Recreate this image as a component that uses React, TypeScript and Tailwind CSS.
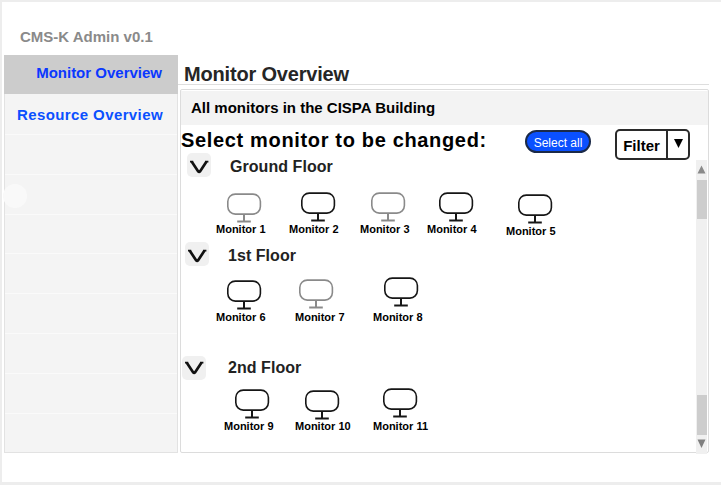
type MonitorInfo = {
  name: string;
  cell: string;
  icon: string;
  label: string;
  dim?: boolean;
};

type FloorInfo = {
  title: string;
  section: string;
  header: string;
  chevron: string;
  heading: string;
  row: string;
  monitors: MonitorInfo[];
};

const floors: FloorInfo[] = [
  {
    title: 'Ground Floor',
    section: 'h-[89px]',
    header: 'pl-[6px]',
    chevron: 'mt-0',
    heading: 'ml-[19px] mt-[4px] tracking-[0.05px]',
    row: 'pl-[35px] pt-[15px]',
    monitors: [
      { name: 'Monitor 1', cell: 'w-[73px]', icon: 'ml-[11px] mt-[1px]', label: 'mt-0', dim: true },
      { name: 'Monitor 2', cell: 'w-[71px]', icon: 'ml-[12px]', label: 'mt-[1px]' },
      { name: 'Monitor 3', cell: 'w-[67px]', icon: 'ml-[11px]', label: 'mt-[1px]', dim: true },
      { name: 'Monitor 4', cell: 'w-[79px]', icon: 'ml-[12px]', label: 'mt-[1px]' },
      { name: 'Monitor 5', cell: 'w-[60px]', icon: 'ml-[12px] mt-[2px]', label: 'mt-[1px]' },
    ],
  },
  {
    title: '1st Floor',
    section: 'h-[114px]',
    header: 'pl-[4px]',
    chevron: 'mt-[-1px]',
    heading: 'ml-[19px] mt-[4px] tracking-[0.05px]',
    row: 'pl-[35px] pt-[11px]',
    monitors: [
      { name: 'Monitor 6', cell: 'w-[79px]', icon: 'ml-[11px] mt-[3px]', label: 'mt-[1px]' },
      { name: 'Monitor 7', cell: 'w-[78px]', icon: 'ml-[4px] mt-[2px]', label: 'mt-[2px]', dim: true },
      { name: 'Monitor 8', cell: 'w-[60px]', icon: 'ml-[10.5px]', label: 'mt-[4px]' },
    ],
  },
  {
    title: '2nd Floor',
    section: 'h-[96px]',
    header: 'pl-px',
    chevron: '-mt-[5px] -ml-px',
    heading: 'ml-[22px] mt-[2px] tracking-[0.05px]',
    row: 'pl-[43px] pt-[8px]',
    monitors: [
      { name: 'Monitor 9', cell: 'w-[71px]', icon: 'ml-[11px] mt-[1px]', label: 'mt-px' },
      { name: 'Monitor 10', cell: 'w-[78px]', icon: 'ml-[10px] mt-[2px]', label: 'mt-0' },
      { name: 'Monitor 11', cell: 'w-[60px]', icon: 'ml-[10px]', label: 'mt-[2px]' },
    ],
  },
];

function MonitorIcon({ dim }: { dim?: boolean }) {
  return (
    <svg
      width="35"
      height="30"
      viewBox="0 0 35 30"
      fill="none"
      className={dim ? 'block text-[#8a8a8a]' : 'block text-[#161616]'}
      stroke="currentColor"
    >
      <rect x="0.8" y="1.1" width="32.6" height="20" rx="7.5" strokeWidth="1.6" />
      <path d="M17 21v7" strokeWidth="2" />
      <path d="M10.2 28.5h13.6" strokeWidth="2" />
    </svg>
  );
}

function Monitor({ info }: { info: MonitorInfo }) {
  return (
    <div className={`shrink-0 ${info.cell}`}>
      <div className={info.icon}>
        <MonitorIcon dim={info.dim} />
      </div>
      <div className={`whitespace-nowrap text-[11px] leading-[12px] font-bold text-black ${info.label}`}>
        {info.name}
      </div>
    </div>
  );
}

function Floor({ floor }: { floor: FloorInfo }) {
  return (
    <section className={floor.section}>
      <div className={`flex h-6 ${floor.header}`}>
        <button className="flex size-6 shrink-0 items-center justify-center rounded-[5px] bg-[#f0f0f0]">
          <svg
            width="24"
            height="24"
            viewBox="0 0 24 24"
            fill="none"
            stroke="#111"
            className={`block shrink-0 ${floor.chevron}`}
          >
            <path d="M3 8.6h3.2M18 8.6h3.4" strokeWidth="1.6" />
            <path d="M4.8 8.8l6.4 9.6q.9 1.1 1.8 0l6.4-9.6" strokeWidth="2.7" />
          </svg>
        </button>
        <h3 className={`whitespace-nowrap text-[16px] leading-[20px] font-bold text-[#222] ${floor.heading}`}>
          {floor.title}
        </h3>
      </div>
      <div className={`flex ${floor.row}`}>
        {floor.monitors.map((m) => (
          <Monitor key={m.name} info={m} />
        ))}
      </div>
    </section>
  );
}

function Scrollbar() {
  return (
    <div className="-mb-[2px] flex w-[11px] flex-1 flex-col items-center bg-[#f0f0f0]">
      <svg width="11" height="20" viewBox="0 0 11 20" className="block shrink-0" fill="#8a8a8a">
        <path d="M5.5 5.5l4 8h-8z" />
      </svg>
      <div className="h-[39px] w-[10px] bg-[#cdcdcd]" />
      <div className="flex-1" />
      <div className="h-[40px] w-[10px] bg-[#cdcdcd]" />
      <svg width="11" height="19" viewBox="0 0 11 19" className="block shrink-0" fill="#808080">
        <path d="M1.5 4.5h8l-4 8.5z" />
      </svg>
    </div>
  );
}

function Sidebar() {
  return (
    <nav className="relative flex h-[398px] w-[174px] shrink-0 flex-col border border-[#e2e2e2] bg-[#f4f4f4] text-[15px] leading-[20px] font-bold">
      <div className="-mx-px -mt-px h-[39px] shrink-0 bg-[#ccc] pt-[8px] pr-[16px] text-right whitespace-nowrap text-[#0a38ff]">
        Monitor Overview
      </div>
      <div className="h-[41px] shrink-0 border-b border-[#fafafa] pt-[11px] pr-[14px] text-right tracking-[0.4px] whitespace-nowrap text-[#0a50ff]">
        Resource Overview
      </div>
      {[0, 1, 2, 3, 4, 5, 6].map((i) => (
        <div key={i} className="h-[39.8px] shrink-0 border-b border-[#fafafa]" />
      ))}
      <span className="absolute top-[128px] -left-[2px] size-6 rounded-full bg-[#f9f9f9]" />
    </nav>
  );
}

export default function App() {
  return (
    <div className="h-[485px] w-[721px] overflow-hidden bg-[#ededed] pt-[2px] pl-[2px] font-['Liberation_Sans',Arial,sans-serif]">
      <div className="h-[480px] bg-white pl-[2px]">
        <header className="h-[53px] pt-[25px] pl-[16px] text-[15px] leading-[20px] font-bold text-[#8a8a8a]">
          CMS-K Admin v0.1
        </header>
        <div className="flex">
          <Sidebar />
          <main className="w-[531px]">
            <h1 className="h-[30px] border-b border-[#dedede] pt-[7px] pl-[6px] text-[20px] leading-[24px] font-bold tracking-[-0.18px] text-[#262626]">
              Monitor Overview
            </h1>
            <section className="mt-[4px] ml-[2px] h-[364px] w-[529px] rounded-[2px] border border-[#dcdcdc]">
              <h2 className="mt-px h-[34px] bg-[#f3f3f3] pt-[7px] pl-[10px] text-[15px] leading-[20px] font-bold text-black">
                All monitors in the CISPA Building
              </h2>
              <div className="flex h-[327px]">
                <div className="w-[434px] shrink-0">
                  <div className="flex h-[28px]">
                    <h2 className="w-[344px] shrink-0 pt-[3px] text-[20px] leading-[24px] font-bold tracking-[0.66px] whitespace-nowrap text-black">
                      Select monitor to be changed:
                    </h2>
                    <button className="mt-[5px] flex h-[23px] w-[66px] items-center justify-center rounded-full border-2 border-[#1b2a48] bg-[#0a50ff] pt-[2px] text-[12px] leading-[14px] whitespace-nowrap text-white">
                      Select all
                    </button>
                  </div>
                  {floors.map((f) => (
                    <Floor key={f.title} floor={f} />
                  ))}
                </div>
                <div className="flex w-[92px] flex-col items-end">
                  <button className="mt-[4px] mr-[17px] flex h-[31px] w-[75px] shrink-0 rounded-[5px] border-2 border-[#2a2a2a] bg-white text-black">
                    <span className="w-[49px] pt-[5px] text-center text-[15px] leading-[20px] font-bold">Filter</span>
                    <span className="flex h-full flex-1 justify-center border-l-2 border-[#2a2a2a] pt-[8px]">
                      <svg width="9" height="9" viewBox="0 0 9 9" className="block">
                        <path d="M0 0h9l-4.5 9z" />
                      </svg>
                    </span>
                  </button>
                  <Scrollbar />
                </div>
              </div>
            </section>
          </main>
        </div>
      </div>
    </div>
  );
}
